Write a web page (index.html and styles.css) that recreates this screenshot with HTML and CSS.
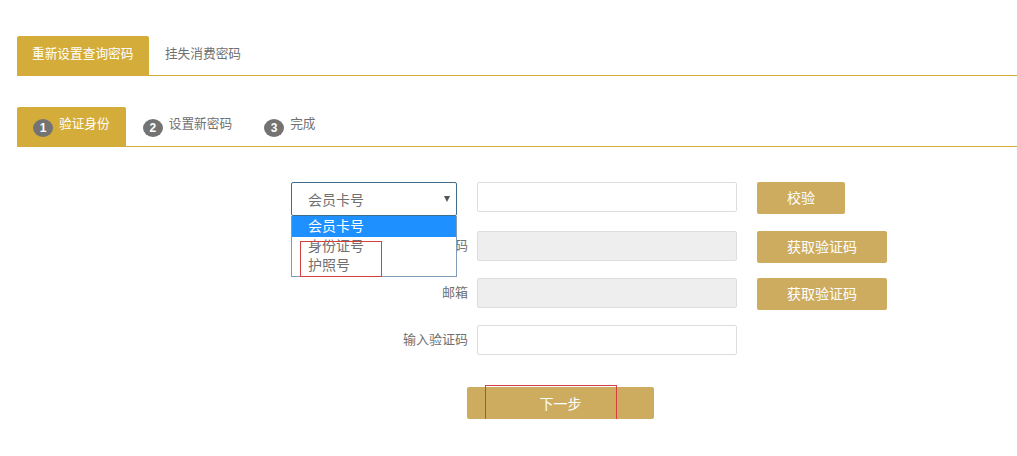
FILE: index.html
```html
<!DOCTYPE html>
<html lang="zh-CN">
<head>
  <meta charset="UTF-8" />
  <title>重新设置查询密码</title>
  <link rel="stylesheet" href="styles.css">
</head>
<body>
  <div class="tabs top-tabs">
    <div class="tab active">重新设置查询密码</div>
    <div class="tab">挂失消费密码</div>
  </div>

  <div class="tabs step-tabs">
    <div class="tab active"><span class="num">1</span><span class="step-text">验证身份</span></div>
    <div class="tab"><span class="num">2</span><span class="step-text">设置新密码</span></div>
    <div class="tab"><span class="num">3</span><span class="step-text">完成</span></div>
  </div>

  <form class="form">
    <div class="row first">
      <div class="label">
        <div class="select-wrap">
          <div class="select"><span>会员卡号</span><i class="arrow"></i></div>
          <ul class="options">
            <li class="selected">会员卡号</li>
            <li>身份证号</li>
            <li>护照号</li>
          </ul>
          <div class="mark list-mark"></div>
        </div>
      </div>
      <div class="input"></div>
      <button type="button" class="btn small">校验</button>
    </div>
    <div class="row">
      <div class="label">手机号码</div>
      <div class="input disabled"></div>
      <button type="button" class="btn">获取验证码</button>
    </div>
    <div class="row">
      <div class="label">邮箱</div>
      <div class="input disabled"></div>
      <button type="button" class="btn">获取验证码</button>
    </div>
    <div class="row">
      <div class="label">输入验证码</div>
      <div class="input"></div>
    </div>
    <div class="next-wrap">
      <button type="button" class="next">下一步</button>
      <div class="mark next-mark"></div>
    </div>
  </form>
</body>
</html>
```

FILE: styles.css
```css
html, body {
  margin: 0;
  padding: 0;
  background: #fff;
  font-family: "Liberation Sans", "Noto Sans CJK SC", sans-serif;
  color: #707070;
}

.tabs {
  display: flex;
  margin-left: 17px;
  border-bottom: 1px solid #d4ac3a;
}

.top-tabs {
  margin-top: 36px;
}

.step-tabs {
  margin-top: 31px;
}

.tab {
  display: flex;
  align-items: center;
  height: 35px;
  padding: 0 16px 4px;
  font-size: 12.7px;
  color: #707070;
  border-radius: 2px 2px 0 0;
}

.top-tabs .tab {
  height: 33px;
  padding: 0 16px 6px;
}

.top-tabs .tab.active {
  padding: 0 15.4px 6px 15px;
}

.tab.active {
  background: #d4ac3a;
  color: #fff;
}

.step-tabs .tab.active {
  margin-right: 1px;
}

.num {
  width: 20px;
  height: 18px;
  margin: 6px 6px 0 0;
  border-radius: 50%;
  background: #737373;
  color: #fff;
  font-size: 12px;
  font-weight: bold;
  line-height: 18px;
  text-align: center;
}

.step-text {
  margin-bottom: 5px;
}

.form {
  margin-top: 35px;
}

.row {
  display: flex;
  align-items: flex-start;
  margin-bottom: 15px;
  margin-left: 291px;
}

.label {
  width: 177px;
  height: 30px;
  line-height: 30px;
  margin-right: 9px;
  text-align: right;
  font-size: 13px;
  color: #707070;
}

.input {
  box-sizing: border-box;
  width: 260px;
  height: 30px;
  border: 1px solid #ddd;
  border-radius: 2px;
  background: #fff;
}

.input.disabled {
  background: #eee;
}

.btn {
  width: 130px;
  height: 32px;
  margin-left: 20px;
  padding: 0 0 2px;
  border: none;
  border-radius: 2px;
  background: #cdac60;
  color: #fff;
  font-family: inherit;
  font-size: 14px;
}

.btn.small {
  width: 88px;
}

.row.first {
  height: 34px;
}

.select-wrap {
  position: relative;
  width: 166px;
}

.select {
  box-sizing: border-box;
  display: flex;
  align-items: center;
  justify-content: space-between;
  height: 34px;
  padding: 1px 6px 0 16px;
  border: 1px solid #3f6d8e;
  border-radius: 2px;
  background: #fff;
  font-size: 14px;
  line-height: 20px;
  text-align: left;
}

.arrow {
  width: 0;
  height: 0;
  margin-top: -2px;
  border-top: 6px solid #555;
  border-left: 3px solid transparent;
  border-right: 3px solid transparent;
}

.options {
  box-sizing: border-box;
  position: absolute;
  top: 34px;
  left: 0;
  z-index: 2;
  width: 166px;
  height: 61px;
  margin: 0;
  padding: 0;
  list-style: none;
  border: 1px solid #7f9db9;
  border-top: none;
  background: #fff;
  font-size: 14px;
  text-align: left;
}

.options li {
  height: 19px;
  padding-left: 16px;
  line-height: 19px;
}

.options li.selected {
  height: 21px;
  line-height: 21px;
  background: #1e90ff;
  color: #fff;
}

.mark {
  box-sizing: border-box;
  position: absolute;
  z-index: 3;
  border: 1px solid #d43f3f;
}

.list-mark {
  top: 59px;
  left: 9px;
  width: 82px;
  height: 36px;
}

.next-wrap {
  position: relative;
  margin: 32px 0 0 467px;
  width: 187px;
}

.next {
  display: block;
  width: 187px;
  height: 32px;
  padding: 0;
  border: none;
  border-radius: 2px;
  background: #cdac60;
  color: #fff;
  font-family: inherit;
  font-size: 14px;
}

.next-mark {
  top: -2px;
  left: 18px;
  width: 132px;
  height: 42px;
}
```
